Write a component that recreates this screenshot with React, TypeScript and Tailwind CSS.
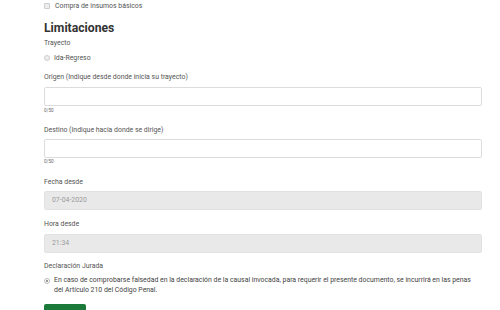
export default function App() {
  return (
    <div className="w-[500px] h-[310px] overflow-hidden bg-white pl-[44px] pr-[18px] font-['Roboto','Liberation_Sans',sans-serif] text-[#555]">
      {/* checkbox row */}
      <div className="h-[12px] flex items-center gap-[5px] text-[6.9px]">
        <span className="w-[6px] h-[6px] border border-[#ccc] bg-[#eee] rounded-[1px]" />
        <span>Compra de insumos básicos</span>
      </div>

      <h2 className="mt-[8px] text-[12.2px] leading-[16px] font-bold text-[#333]">Limitaciones</h2>

      <div className="mt-[2px] text-[6.9px] leading-[10px]">Trayecto</div>

      <div className="mt-[5px] h-[10px] flex items-center gap-[4px] text-[6.9px]">
        <span className="w-[6px] h-[6px] rounded-full border border-[#ccc] bg-[#eee]" />
        <span>Ida-Regreso</span>
      </div>

      <div className="mt-[9px] text-[6.9px] leading-[10px]">Origen (Indique desde donde inicia su trayecto)</div>
      <div className="mt-[5px] h-[19px] border border-[#dcdcdc] rounded-[2px] bg-white" />
      <div className="mt-[1px] text-[4.5px] leading-[8px] text-[#666]">0/50</div>

      <div className="mt-[10px] text-[6.9px] leading-[10px]">Destino (Indique hacia donde se dirige)</div>
      <div className="mt-[4px] h-[19px] border border-[#dcdcdc] rounded-[2px] bg-white" />
      <div className="text-[4.5px] leading-[8px] text-[#666]">0/50</div>

      <div className="mt-[11px] text-[6.9px] leading-[10px]">Fecha desde</div>
      <div className="mt-[4px] h-[19px] border border-[#e2e2e2] rounded-[2px] bg-[#e9e9ea] flex items-center px-[7px] text-[6.9px] text-[#999]">
        07-04-2020
      </div>

      <div className="mt-[9px] text-[6.9px] leading-[10px]">Hora desde</div>
      <div className="mt-[5px] h-[19px] border border-[#e2e2e2] rounded-[2px] bg-[#e9e9ea] flex items-center px-[7px] text-[6.9px] text-[#999]">
        21:34
      </div>

      <div className="mt-[8px] text-[6.9px] leading-[10px]">Declaración Jurada</div>
      <div className="mt-[5px] flex gap-[4px] text-[6.9px] leading-[9.5px] text-[#444]">
        <span className="mt-[2px] shrink-0 w-[6px] h-[6px] rounded-full border border-[#bbb] bg-white flex items-center justify-center">
          <span className="w-[2px] h-[2px] rounded-full bg-[#777]" />
        </span>
        <p className="pr-[3px]">
          En caso de comprobarse falsedad en la declaración de la causal invocada, para requerir el presente documento, se incurrirá en las penas del Artículo 210 del Código Penal.
        </p>
      </div>

      <button className="mt-[9px] w-[42px] h-[20px] rounded-[2px] bg-[#1b7a3a]" />
    </div>
  );
}
